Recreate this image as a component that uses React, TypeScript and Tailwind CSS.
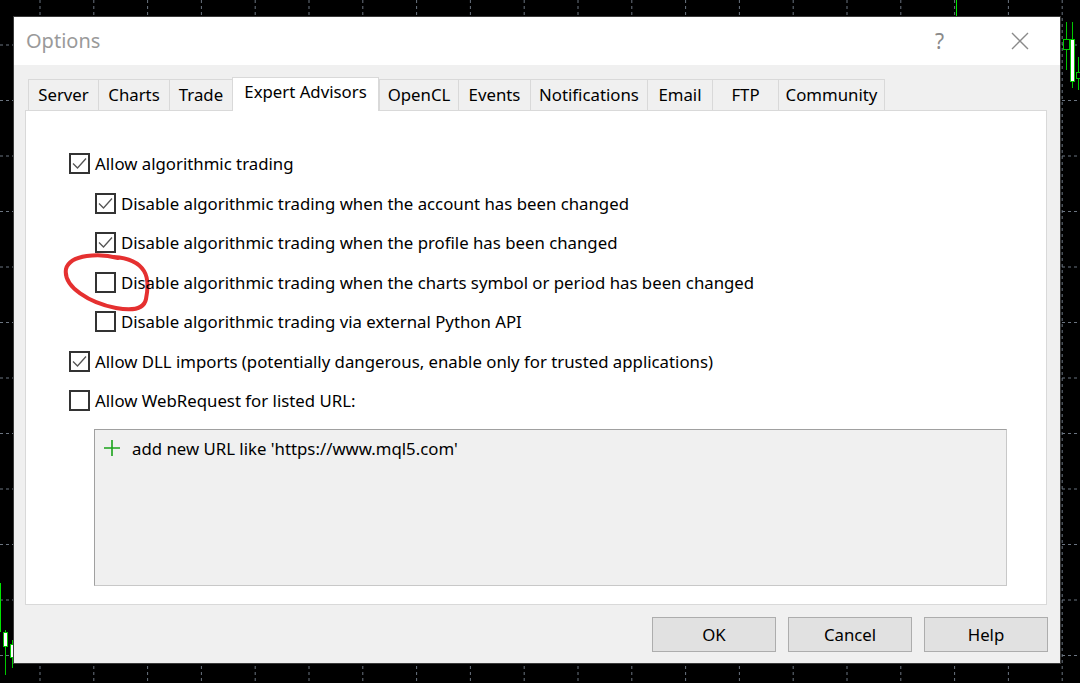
import React from "react";

const FONT = { fontFamily: '"Noto Sans", "Open Sans", sans-serif' };

const tabs = [
  { label: "Server", w: 70 },
  { label: "Charts", w: 71 },
  { label: "Trade", w: 63 },
  { label: "Expert Advisors", w: 147, active: true },
  { label: "OpenCL", w: 79 },
  { label: "Events", w: 72 },
  { label: "Notifications", w: 117 },
  { label: "Email", w: 65 },
  { label: "FTP", w: 66 },
  { label: "Community", w: 107 },
];

const rows = [
  { label: "Allow algorithmic trading", checked: true, indent: false },
  { label: "Disable algorithmic trading when the account has been changed", checked: true, indent: true },
  { label: "Disable algorithmic trading when the profile has been changed", checked: true, indent: true },
  { label: "Disable algorithmic trading when the charts symbol or period has been changed", checked: false, indent: true, circled: true },
  { label: "Disable algorithmic trading via external Python API", checked: false, indent: true },
  { label: "Allow DLL imports (potentially dangerous, enable only for trusted applications)", checked: true, indent: false },
  { label: "Allow WebRequest for listed URL:", checked: false, indent: false },
];

function ChartBackground() {
  const xs = Array.from({ length: 21 }, (_, i) => 40 + i * 53.8);
  const ys = Array.from({ length: 13 }, (_, i) => 45 + i * 55.5);
  return (
    <svg className="absolute inset-0" width="1080" height="683" viewBox="0 0 1080 683">
      <rect width="1080" height="683" fill="#000" />
      {xs.map((x) => (
        <line key={"x" + x} x1={x} y1={0} x2={x} y2={683} stroke="#6b7480" strokeWidth="1" strokeDasharray="3 3" />
      ))}
      {ys.map((y) => (
        <line key={"y" + y} x1={0} y1={y} x2={1080} y2={y} stroke="#6b7480" strokeWidth="1" strokeDasharray="3 3" />
      ))}
      {/* candles */}
      <line x1="956.5" y1="0" x2="956.5" y2="17" stroke="#00e600" strokeWidth="1" />
      <line x1="1066.5" y1="22" x2="1066.5" y2="70" stroke="#00c800" />
      <rect x="1063.5" y="39.5" width="6" height="10" fill="#000" stroke="#00c800" />
      <line x1="1072.5" y1="22" x2="1072.5" y2="88" stroke="#00c800" />
      <rect x="1070.5" y="39.5" width="4" height="42" fill="#fff" stroke="#00c800" />
      <line x1="1078.5" y1="57" x2="1078.5" y2="90" stroke="#00c800" />
      <rect x="1076.5" y="72.5" width="4" height="6" fill="#000" stroke="#00c800" />
      <line x1="0.5" y1="583" x2="0.5" y2="632" stroke="#00e600" />
      <line x1="5.5" y1="630" x2="5.5" y2="675" stroke="#00c800" />
      <rect x="3.5" y="632.5" width="4" height="14" fill="#fff" stroke="#00c800" />
      <line x1="12.5" y1="640" x2="12.5" y2="668" stroke="#00c800" />
      <rect x="10.5" y="644.5" width="3" height="13" fill="#fff" stroke="#00c800" />
    </svg>
  );
}

function CheckBox({ checked }: { checked: boolean }) {
  return (
    <span className="w-[21px] h-[21px] border-2 border-[#333333] bg-white flex items-center justify-center shrink-0">
      {checked && (
        <svg width="17" height="17" viewBox="0 0 17 17">
          <path d="M2 8.5 L6.5 13 L15 3.5" fill="none" stroke="#555" strokeWidth="1.3" />
        </svg>
      )}
    </span>
  );
}

export default function App() {
  return (
    <div className="relative w-[1080px] h-[683px] overflow-hidden bg-black" style={FONT}>
      <ChartBackground />
      <div className="relative pt-[17px] pl-[14px]">
        <div className="w-[1046px] h-[646px] bg-[#f0f0f0] flex flex-col shadow-[0_0_0_1px_#3a3a3a]">
          {/* Title bar */}
          <div className="h-[48px] bg-white flex items-center pl-[12px] shrink-0">
            <span className="text-[20px] text-[#9a9a9a] leading-none">Options</span>
            <span className="ml-auto text-[21px] text-[#8a8a8a] leading-none mr-[66px]">?</span>
            <svg width="20" height="20" viewBox="0 0 20 20" className="mr-[30px]">
              <path d="M2 2 L18 18 M18 2 L2 18" stroke="#8a8a8a" strokeWidth="1.4" />
            </svg>
          </div>

          {/* Tabs */}
          <div className="flex items-end pl-[14px] mt-[11px] h-[34px] shrink-0">
            {tabs.map((t) =>
              t.active ? (
                <div
                  key={t.label}
                  className="h-[34px] bg-white border border-b-0 border-[#d9d9d9] flex items-start pt-[1px] justify-center text-[16.8px] text-black relative z-10 -mb-px"
                  style={{ width: t.w }}
                >
                  {t.label}
                </div>
              ) : (
                <div
                  key={t.label}
                  className="h-[31px] bg-[#f0f0f0] border border-b-0 border-r-0 last:border-r border-[#d9d9d9] flex items-center justify-center text-[16.8px] text-black"
                  style={{ width: t.w }}
                >
                  {t.label}
                </div>
              )
            )}
          </div>

          {/* Panel */}
          <div className="ml-[11px] mr-[13px] h-[495px] bg-white border border-[#d9d9d9] pt-[33px] pl-[43px] shrink-0">
            <div className="flex flex-col">
              {rows.map((r) => (
                <div
                  key={r.label}
                  className={"h-[39.5px] flex items-center gap-[5px] relative " + (r.indent ? "pl-[26px]" : "")}
                >
                  {r.circled && (
                    <svg className="absolute left-[-9px] top-[-12px]" width="96" height="66" viewBox="0 0 96 66">
                      <path
                        d="M58 7 C40 2 10 3 6 18 C3 36 30 52 56 57 C72 60 84 58 86 48 C88 38 89 28 84 20 C79 12 70 7 54 6"
                        fill="none"
                        stroke="#e53030"
                        strokeWidth="4"
                        strokeLinecap="round"
                      />
                    </svg>
                  )}
                  <CheckBox checked={r.checked} />
                  <span className="text-[16.8px] text-black whitespace-nowrap relative">{r.label}</span>
                </div>
              ))}
            </div>
            <div className="ml-[25px] mt-[8px] w-[913px] h-[157px] bg-[#f0f0f0] border border-[#a0a0a0] border-r-[#c8c8c8] border-b-[#c8c8c8] pt-[6px] pl-[8px]">
              <div className="flex items-center gap-[11px]">
                <svg width="18" height="18" viewBox="0 0 18 18">
                  <path d="M9 1 V17 M1 9 H17" stroke="#1aa31a" strokeWidth="1.6" />
                </svg>
                <span className="text-[16.8px] text-black">add new URL like 'https://www.mql5.com'</span>
              </div>
            </div>
          </div>

          {/* Buttons */}
          <div className="flex justify-end gap-[12px] mr-[12px] mt-[12px]">
            {["OK", "Cancel", "Help"].map((b) => (
              <button
                key={b}
                className="w-[124px] h-[35px] bg-[#e1e1e1] border border-[#adadad] text-[16.8px] text-black flex items-center justify-center"
              >
                {b}
              </button>
            ))}
          </div>
        </div>
      </div>
    </div>
  );
}
